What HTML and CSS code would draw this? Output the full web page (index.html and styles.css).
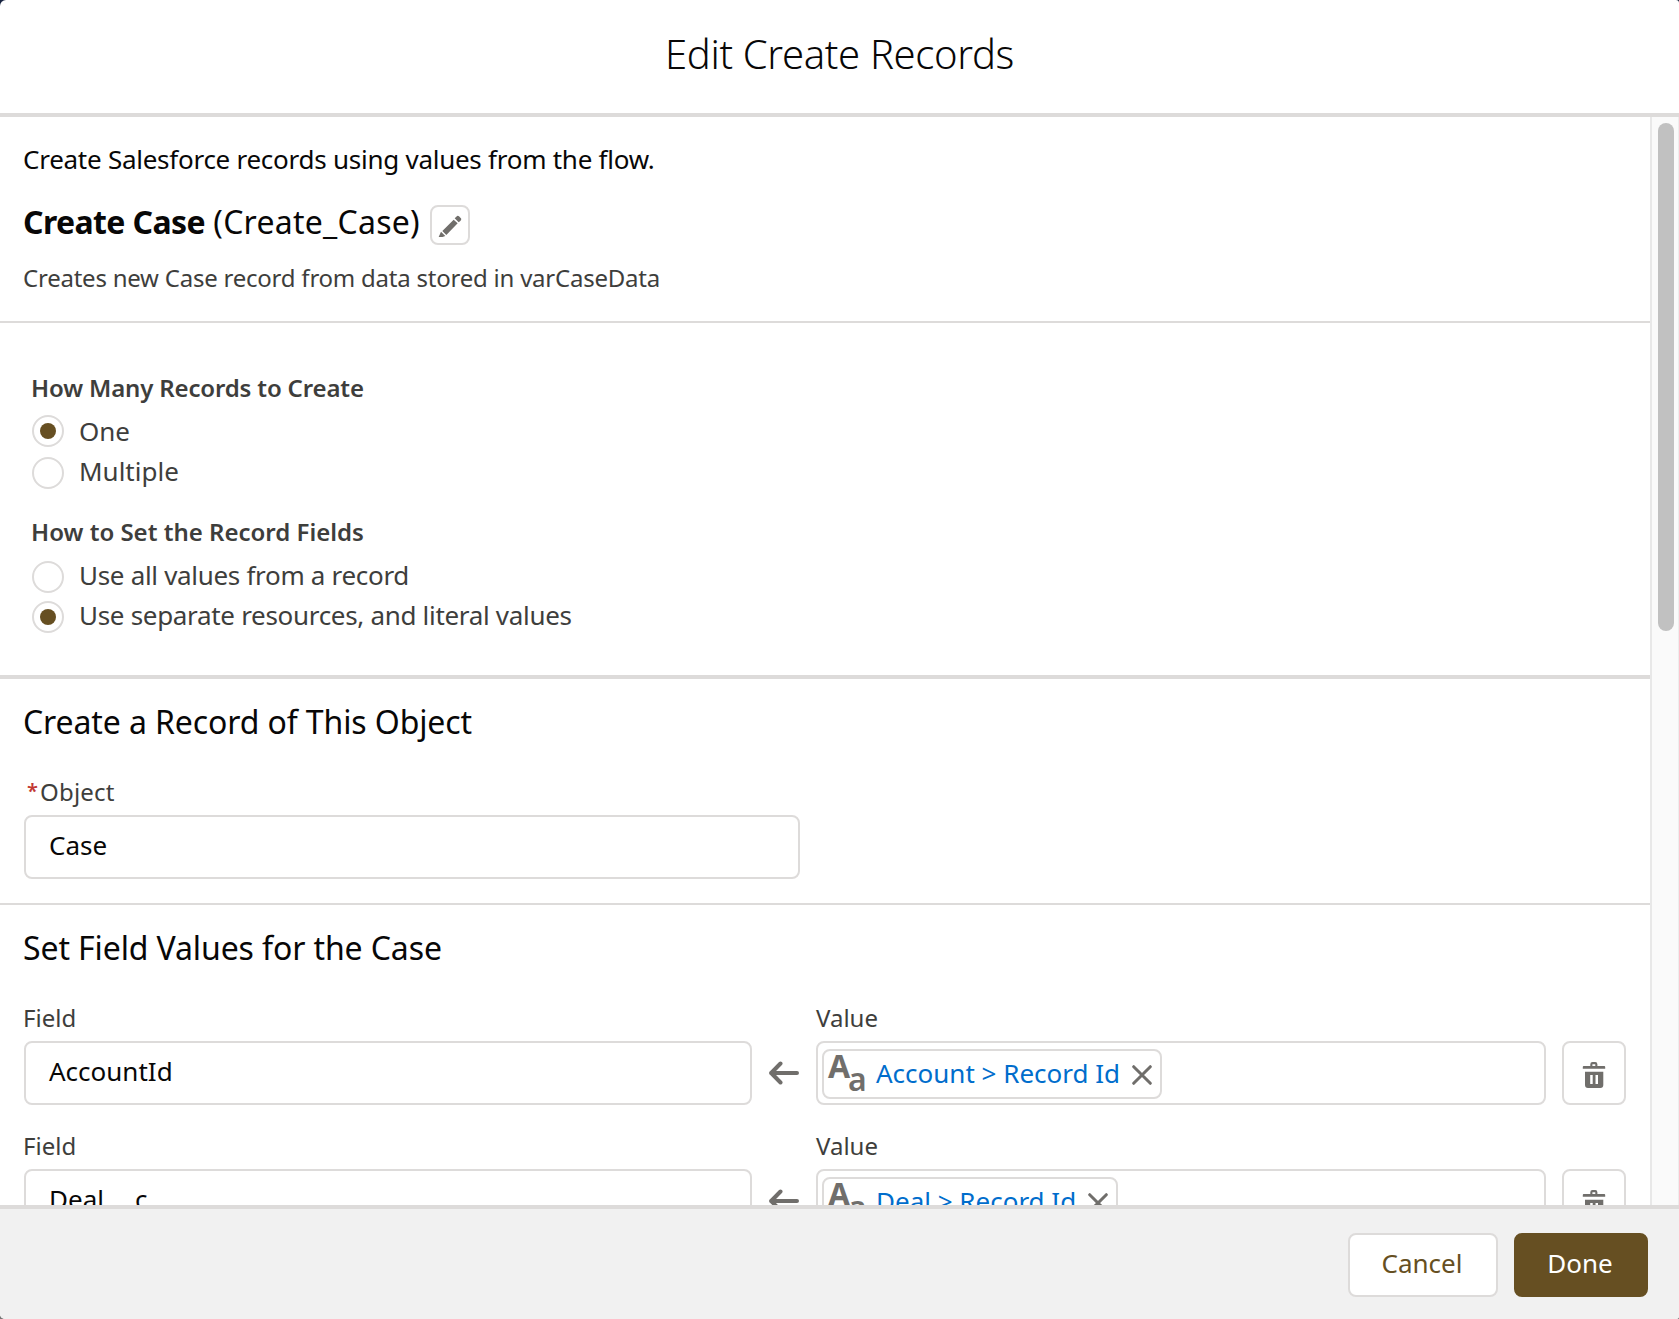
FILE: index.html
```
<!DOCTYPE html>
<html lang="en">
<head>
<meta charset="utf-8">
<title>Edit Create Records</title>
<link rel="stylesheet" href="styles.css">
</head>
<body>
<svg class="sprite" aria-hidden="true">
  <symbol id="arrow-left" viewBox="0 0 30 24"><path d="M2 12H28M11.500 2.500L2.200 12L11.500 21.500" fill="none" stroke="currentColor" stroke-width="4" stroke-linecap="round" stroke-linejoin="round"/></symbol>
  <symbol id="close" viewBox="0 0 20 20"><path d="M1.700 1.700L18.300 18.300M18.300 1.700L1.700 18.300" fill="none" stroke="currentColor" stroke-width="3" stroke-linecap="round"/></symbol>
  <symbol id="trash" viewBox="0 0 24 26"><path fill="currentColor" fill-rule="evenodd" d="M8.300 4V2.300Q8.300 0 10.500 0H13.200Q15.400 0 15.400 2.300V4H22.300Q23.200 4 23.200 5V6.800H.800V5Q.800 4 1.700 4ZM10.400 4H13.300V2.200H10.400ZM3 9.800H21.300V23Q21.300 26 18.300 26H6Q3 26 3 23ZM8.200 13V22H10.700V13ZM13.500 13V22H16V13Z"/></symbol>
  <symbol id="pencil" viewBox="39 39 72 72"><path fill="currentColor" d="M52 93L86 59L98 70L64 105ZM89 55L94 50Q98 45 102 49L107 54Q111 58 106 63L101 67ZM48 95L61 108L44 114Q40 115 41 111Z"/></symbol>
</svg>
<div class="modal">
  <header class="modal-header"><h1>Edit Create Records</h1></header>
  <div class="modal-body">
    <main class="content">
      <section class="intro">
        <p class="lead">Create Salesforce records using values from the flow.</p>
        <div class="name-row">
          <h2 class="name"><strong>Create Case</strong> <span class="api">(Create_Case)</span></h2>
          <button class="edit" aria-label="Edit"><svg width="24" height="24"><use href="#pencil"/></svg></button>
        </div>
        <p class="description">Creates new Case record from data stored in varCaseData</p>
      </section>
      <section class="options">
        <div class="group">
          <h3>How Many Records to Create</h3>
          <label class="option"><span class="radio checked raised"></span><span>One</span></label>
          <label class="option"><span class="radio"></span><span>Multiple</span></label>
        </div>
        <div class="group">
          <h3>How to Set the Record Fields</h3>
          <label class="option tight"><span class="radio"></span><span>Use all values from a record</span></label>
          <label class="option tight"><span class="radio checked"></span><span>Use separate resources, and literal values</span></label>
        </div>
      </section>
      <section class="object">
        <h2>Create a Record of This Object</h2>
        <div class="label required"><span class="star">*</span>Object</div>
        <div class="input object-input">Case</div>
      </section>
      <section class="fields">
        <h2>Set Field Values for the Case</h2>
        <div class="row">
          <div class="cell"><div class="label">Field</div><div class="input">AccountId</div></div>
          <svg class="arrow" width="30" height="24"><use href="#arrow-left"/></svg>
          <div class="cell value"><div class="label">Value</div>
            <div class="input pill-box"><div class="pill"><svg class="type" width="38" height="44"><text class="type-upper" x="0" y="27">A</text><text class="type-lower" x="20" y="40">a</text></svg><span class="pill-text">Account &gt; Record Id</span><svg class="close" width="20" height="20"><use href="#close"/></svg></div></div>
          </div>
          <button class="delete" aria-label="Delete"><svg width="24" height="26"><use href="#trash"/></svg></button>
        </div>
        <div class="row">
          <div class="cell"><div class="label">Field</div><div class="input">Deal<span class="wide">__</span>c</div></div>
          <svg class="arrow" width="30" height="24"><use href="#arrow-left"/></svg>
          <div class="cell value"><div class="label">Value</div>
            <div class="input pill-box"><div class="pill"><svg class="type" width="38" height="44"><text class="type-upper" x="0" y="27">A</text><text class="type-lower" x="20" y="40">a</text></svg><span class="pill-text">Deal &gt; Record Id</span><svg class="close" width="20" height="20"><use href="#close"/></svg></div></div>
          </div>
          <button class="delete" aria-label="Delete"><svg width="24" height="26"><use href="#trash"/></svg></button>
        </div>
      </section>
    </main>
    <div class="scrollbar"><div class="thumb"></div></div>
  </div>
  <footer class="modal-footer">
    <button class="btn cancel">Cancel</button>
    <button class="btn done">Done</button>
  </footer>
</div>
</body>
</html>
```
FILE: styles.css
```
* { box-sizing: border-box; }
html, body { height: 100%; margin: 0; }
body {
  background: linear-gradient(#16223f 50%, #777 50%);
  font: 26px/39px "Noto Sans", sans-serif;
  color: #080707;
  overflow: hidden;
}
h1, h2, h3, p { margin: 0; font-weight: 400; }
button { font: inherit; padding: 0; }
svg { display: block; flex: none; }
.sprite { position: absolute; width: 0; height: 0; }

.modal { display: flex; flex-direction: column; height: 1319px; background: #fff; border-radius: 6px 3px 3px 5px; overflow: hidden; }
.modal-header { flex: none; height: 117px; padding-top: 29px; border-bottom: 4px solid #dddbda; text-align: center; }
.modal-header h1 { font-size: 40px; line-height: 50px; font-weight: 300; letter-spacing: -.33px; }
.modal-body { flex: 1; min-height: 0; display: flex; overflow: hidden; }
.content { flex: 1; min-width: 0; }
.scrollbar { flex: none; width: 29px; padding: 6px 4px 0 6px; background: #fafafa; border-left: 2px solid #e8e8e8; border-right: 1px solid #ededed; }
.thumb { width: 16px; height: 508px; border-radius: 8px; background: #c1c1c1; }

section { padding: 23px 24px 24px 23px; border-bottom: 2px solid #dddbda; }
section h2 { font-size: 32px; line-height: 40px; letter-spacing: -.11px; }

.intro { padding-bottom: 25px; }
.lead { letter-spacing: -.26px; }
.name-row { display: flex; align-items: flex-start; gap: 8px; margin-top: 23px; }
.name { width: 399px; white-space: nowrap; }
.name strong { font-weight: 700; letter-spacing: -.6px; }
.api { letter-spacing: .25px; }
.edit { display: grid; place-items: center; width: 40px; height: 40px; margin-top: 3px; border: 2px solid #dddbda; border-radius: 8px; background: #fff; color: #706e6b; }
.description { margin-top: 15px; font-size: 24px; line-height: 36px; letter-spacing: -.23px; color: #3e3e3c; }

.options { padding: 47px 24px 42px 31px; border-bottom-width: 4px; color: #3e3e3c; }
.group + .group { margin-top: 25px; }
.group h3 { margin-bottom: 11px; font-size: 24px; line-height: 36px; font-weight: 600; letter-spacing: -.16px; }
.group + .group h3 { letter-spacing: 0; }
.option { display: flex; gap: 15px; height: 32px; margin-left: 1px; line-height: 28px; }
.option + .option { margin-top: 8px; }
.option.tight { letter-spacing: -.31px; }
.radio { flex: none; display: grid; place-items: center; width: 32px; height: 32px; border: 2px solid #dddbda; border-radius: 50%; background: #fff; }
.radio.raised { margin-top: -2px; }
.radio.checked::before { content: ""; width: 16px; height: 16px; border-radius: 50%; background: #664f22; }

.label { height: 36px; font-size: 24px; line-height: 36px; color: #3e3e3c; }
.required { display: flex; letter-spacing: .2px; }
.star { width: 17px; padding-left: 4px; font-size: 20px; font-weight: 600; line-height: 34px; color: #c23934; }
.input { height: 64px; margin-top: 5px; padding-left: 23px; border: 2px solid #dddbda; border-radius: 8px; background: #fff; line-height: 56px; }
.object h2, .fields h2 { margin-bottom: 32px; }
.object-input { width: 776px; margin-left: 1px; }
.wide { letter-spacing: 4px; }

.row { display: flex; align-items: flex-end; }
.row + .row { margin-top: 23px; }
.cell { width: 729px; }
.cell .input { margin-left: 1px; }
.cell.value { width: 730px; }
.value .input { margin-left: 0; }
.arrow { margin: 0 17px 20px; color: #706e6b; }
.pill-box { display: flex; align-items: flex-start; padding: 6px 4px; }
.pill { display: flex; align-items: flex-start; height: 50px; padding: 0 8px 0 4px; border: 2px solid #dddbda; border-radius: 8px; line-height: 44px; }
.type { fill: #706e6b; overflow: visible; }
.type-upper { font-size: 32px; font-weight: 700; }
.type-lower { font-size: 32px; font-weight: 600; }
.pill-text { margin-left: 10px; color: #006dcc; white-space: nowrap; }
.close { margin: 14px 0 0 12px; color: #706e6b; }
.delete { display: grid; place-items: center; width: 64px; height: 64px; margin-left: 16px; padding-top: 4px; border: 2px solid #dddbda; border-radius: 8px; background: #fff; color: #706e6b; }

.modal-footer { position: relative; flex: none; display: flex; justify-content: flex-end; gap: 16px; height: 114px; padding: 24px 31px 0 0; border-top: 4px solid #dddbda; background: #f1f1f1; }
.btn { height: 64px; padding: 0 2px 4px 0; border: 2px solid #dddbda; border-radius: 8px; }
.cancel { width: 150px; background: #fff; color: #664f22; }
.done { width: 134px; border-color: #664f22; background: #664f22; color: #fff; }
```
